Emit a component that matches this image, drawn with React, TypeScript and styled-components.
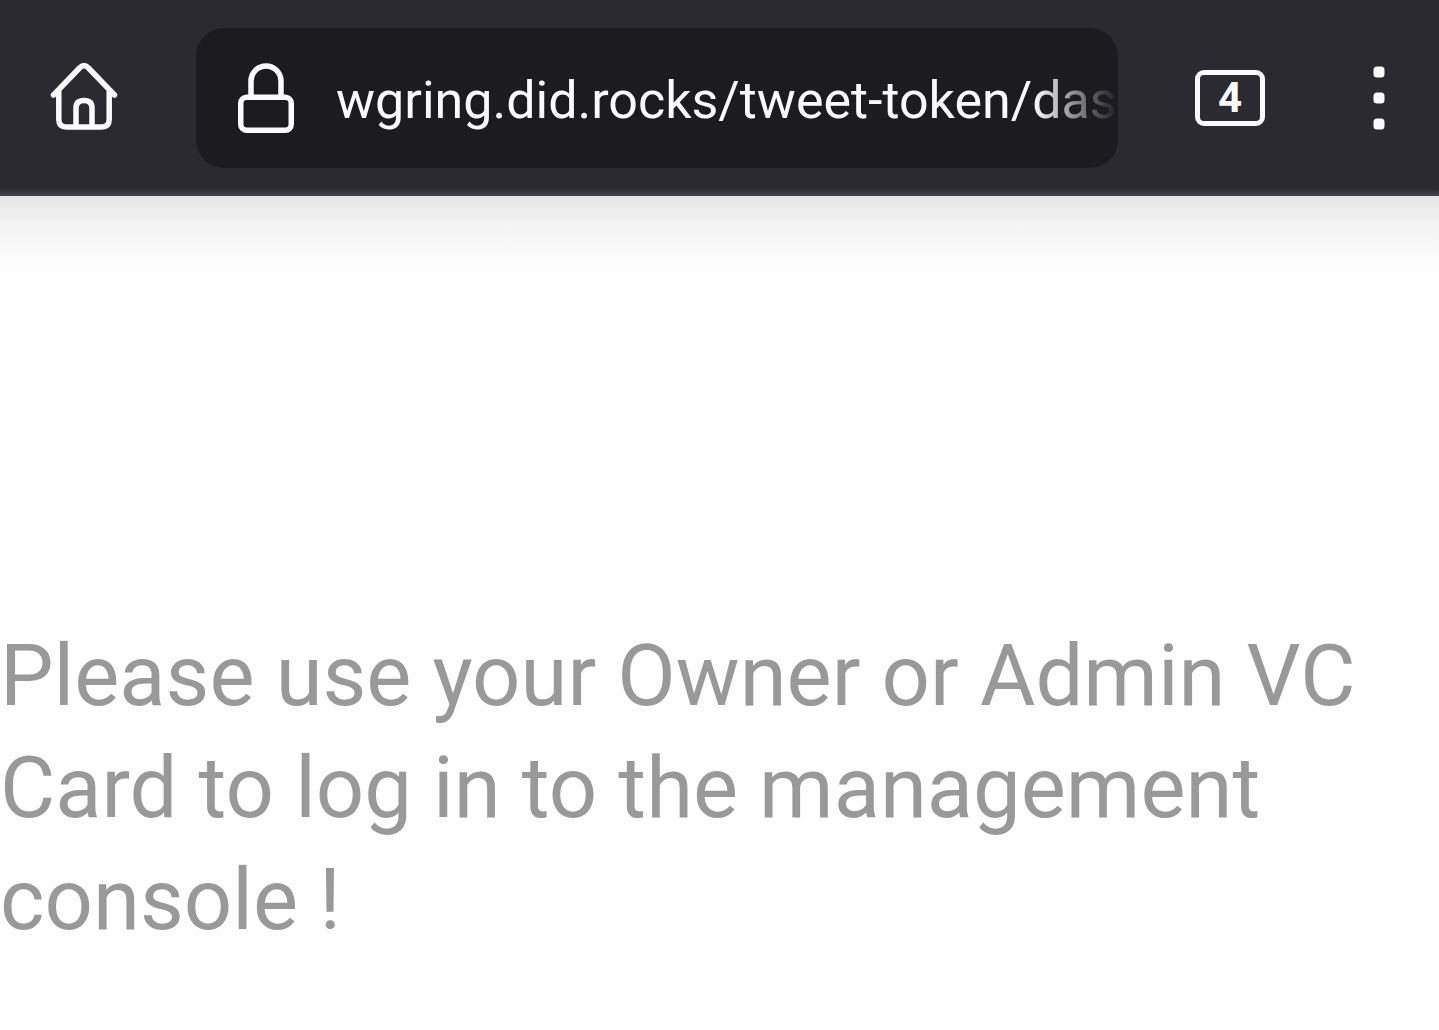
import React from 'react';
import styled, { createGlobalStyle } from 'styled-components';

const GlobalStyle = createGlobalStyle`
  *, *::before, *::after { box-sizing: border-box; }
  body { margin: 0; background: #fefefe; font-family: Roboto, sans-serif; }
`;

const Toolbar = styled.header`
  display: flex;
  align-items: center;
  height: 196px;
  padding: 0 4px 0 28px;
  background: linear-gradient(#2b2a30 0, #2b2a30 188px, #434246 196px);
`;

const Actions = styled.div`
  display: flex;
  flex: none;
  gap: 37px;
`;

const IconButton = styled.button`
  display: flex;
  flex: none;
  align-items: center;
  justify-content: center;
  width: 112px;
  height: 112px;
  padding: 0;
  border: 0;
  background: none;
  color: #fbfbfe;
`;

const AddressBar = styled.label`
  display: flex;
  flex: 1;
  align-items: center;
  gap: 42px;
  min-width: 0;
  height: 140px;
  margin: 0 56px;
  padding-left: 42px;
  overflow: hidden;
  border-radius: 28px;
  background: #1c1b1f;
`;

const Address = styled.input`
  flex: 1;
  min-width: 0;
  height: 80px;
  padding: 4px 0 0;
  border: 0;
  outline: 0;
  background: none;
  color: #fbfbfe;
  font: 400 52px Roboto, sans-serif;
  mask-image: linear-gradient(to left, transparent 0, #000 84px);
`;

const TabCount = styled.span`
  display: flex;
  align-items: center;
  justify-content: center;
  width: 70px;
  height: 56px;
  border: 5px solid #fbfbfe;
  border-radius: 9px;
  font: 700 42px/46px Roboto, sans-serif;
`;

const Page = styled.main`
  padding-top: 424px;
  background: linear-gradient(#e4e4e6 0, #ececec 12px, #f3f3f3 28px, #fafafa 59px, #fdfdfd 61px, #fefefe 92px);
`;

const Message = styled.p`
  margin: 0;
  color: #999;
  font-size: 85px;
  line-height: 112px;
`;

export default function App() {
  return (
    <>
      <GlobalStyle />
      <Toolbar>
        <IconButton aria-label="Home">
          <svg width="70" height="70" viewBox="0 0 70 70" fill="none" stroke="currentColor" strokeWidth="5.5" strokeLinecap="round" strokeLinejoin="round">
            <path d="M4.500 32 31 4.500q4-3.500 8 0L65.500 32M9.800 29v27.500q0 7.500 7.500 7.500h35.400q7.500 0 7.500-7.500V29M27 63V45q0-7.600 8-7.600t8 7.600v18" />
          </svg>
        </IconButton>
        <AddressBar>
          <svg width="56" height="70" viewBox="0 0 56 70" fill="none" stroke="#fbfbfe" strokeWidth="5.5">
            <rect x="2.75" y="34.25" width="50.500" height="33" rx="6" />
            <path d="M13 34V18a15 15 0 0 1 30 0v16" />
          </svg>
          <Address aria-label="Address" readOnly value="wgring.did.rocks/tweet-token/dashboard" />
        </AddressBar>
        <Actions>
          <IconButton aria-label="4 open tabs">
            <TabCount>4</TabCount>
          </IconButton>
          <IconButton aria-label="Menu">
            <svg width="12" height="64" viewBox="0 0 12 64" fill="currentColor">
              <rect x="0.500" y="0.500" width="11" height="11" rx="3.500" />
              <rect x="0.500" y="26.500" width="11" height="11" rx="3.500" />
              <rect x="0.500" y="52.500" width="11" height="11" rx="3.500" />
            </svg>
          </IconButton>
        </Actions>
      </Toolbar>
      <Page>
        <Message>Please use your Owner or Admin VC Card to log in to the management console !</Message>
      </Page>
    </>
  );
}
